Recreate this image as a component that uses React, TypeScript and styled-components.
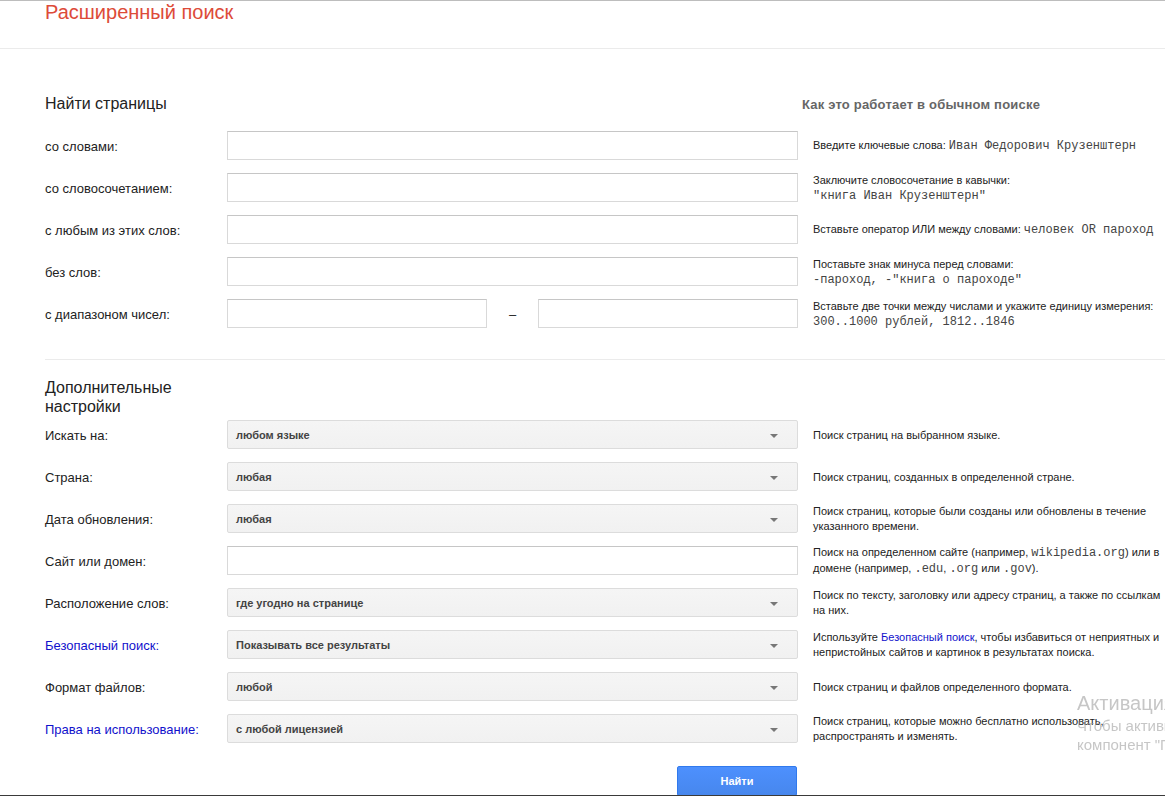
import type { ReactNode } from 'react';
import styled, { createGlobalStyle } from 'styled-components';

const GlobalStyle = createGlobalStyle`
    html, body {
        margin: 0;
        padding: 0;
        background: #fff;
        overflow: hidden;
    }
    body {
        font-family: 'Liberation Sans', Arial, sans-serif;
        color: #222;
    }
`;

interface TextRow {
    label: string;
    hint: ReactNode;
    range?: boolean;
}

interface OptionRow {
    label: string;
    value?: string;
    link?: boolean;
    hint: ReactNode;
}

export default function App() {
    const textRows: TextRow[] = [
        {
            label: 'со словами:',
            hint: (
                <>
                    Введите ключевые слова: <Code>Иван Федорович Крузенштерн</Code>
                </>
            ),
        },
        {
            label: 'со словосочетанием:',
            hint: (
                <>
                    Заключите словосочетание в кавычки:
                    <br />
                    <Code>"книга Иван Крузенштерн"</Code>
                </>
            ),
        },
        {
            label: 'с любым из этих слов:',
            hint: (
                <>
                    Вставьте оператор ИЛИ между словами: <Code>человек OR пароход</Code>
                </>
            ),
        },
        {
            label: 'без слов:',
            hint: (
                <>
                    Поставьте знак минуса перед словами:
                    <br />
                    <Code>-пароход, -"книга о пароходе"</Code>
                </>
            ),
        },
        {
            label: 'с диапазоном чисел:',
            range: true,
            hint: (
                <>
                    Вставьте две точки между числами и укажите единицу измерения:
                    <br />
                    <Code>300..1000 рублей, 1812..1846</Code>
                </>
            ),
        },
    ];

    const optionRows: OptionRow[] = [
        {
            label: 'Искать на:',
            value: 'любом языке',
            hint: 'Поиск страниц на выбранном языке.',
        },
        {
            label: 'Страна:',
            value: 'любая',
            hint: 'Поиск страниц, созданных в определенной стране.',
        },
        {
            label: 'Дата обновления:',
            value: 'любая',
            hint: 'Поиск страниц, которые были созданы или обновлены в течение указанного времени.',
        },
        {
            label: 'Сайт или домен:',
            hint: (
                <>
                    Поиск на определенном сайте (например, <Code>wikipedia.org</Code>) или в
                    домене (например, <Code>.edu</Code>, <Code>.org</Code> или <Code>.gov</Code>).
                </>
            ),
        },
        {
            label: 'Расположение слов:',
            value: 'где угодно на странице',
            hint: 'Поиск по тексту, заголовку или адресу страниц, а также по ссылкам на них.',
        },
        {
            label: 'Безопасный поиск:',
            value: 'Показывать все результаты',
            link: true,
            hint: (
                <>
                    Используйте <HintLink>Безопасный поиск</HintLink>, чтобы избавиться от
                    неприятных и непристойных сайтов и картинок в результатах поиска.
                </>
            ),
        },
        {
            label: 'Формат файлов:',
            value: 'любой',
            hint: 'Поиск страниц и файлов определенного формата.',
        },
        {
            label: 'Права на использование:',
            value: 'с любой лицензией',
            link: true,
            hint: 'Поиск страниц, которые можно бесплатно использовать, распространять и изменять.',
        },
    ];

    return (
        <Page>
            <GlobalStyle />
            <Header>
                <Title>Расширенный поиск</Title>
            </Header>

            <Section>
                <SectionHead>
                    <Heading>Найти страницы</Heading>
                    <HowHeading>Как это работает в обычном поиске</HowHeading>
                </SectionHead>

                <Rows>
                    {textRows.map((row, i) => (
                        <Row key={i}>
                            <Label>{row.label}</Label>
                            {row.range ? (
                                <RangeWrap>
                                    <TextInput $width={260} />
                                    <Dash>–</Dash>
                                    <TextInput $width={260} />
                                </RangeWrap>
                            ) : (
                                <TextInput />
                            )}
                            <Hint>{row.hint}</Hint>
                        </Row>
                    ))}
                </Rows>
            </Section>

            <Divider />

            <Section>
                <ExtraHeading>Дополнительные настройки</ExtraHeading>
                <Rows $top={4}>
                    {optionRows.map((row, i) => (
                        <Row key={i}>
                            <Label $link={row.link}>{row.label}</Label>
                            {row.value !== undefined ? (
                                <SelectBox>
                                    {row.value}
                                    <Arrow />
                                </SelectBox>
                            ) : (
                                <TextInput />
                            )}
                            <Hint>{row.hint}</Hint>
                        </Row>
                    ))}
                </Rows>

                <ButtonRow>
                    <SubmitButton>Найти</SubmitButton>
                </ButtonRow>
            </Section>

            {/* system watermark lying over the page */}
            <Watermark>
                <WatermarkTitle>Активация Windows</WatermarkTitle>
                <WatermarkText>Чтобы активировать Windows, перейдите в</WatermarkText>
                <WatermarkText>компонент "Параметры ПК".</WatermarkText>
            </Watermark>
            <TaskbarEdge />
        </Page>
    );
}

const Page = styled.div`
    width: 1240px;
    min-height: 796px;
    border-top: 1px solid #bdbdbd;
`;

const Header = styled.header`
    height: 47px;
    padding-left: 45px;
    border-bottom: 1px solid #ebebeb;
`;

const Title = styled.h1`
    margin: 0;
    padding-top: 1px;
    font-size: 20px;
    line-height: 20px;
    font-weight: normal;
    color: #dd4b39;
`;

const Section = styled.section`
    padding-left: 45px;
`;

const SectionHead = styled.div`
    display: flex;
    align-items: baseline;
    margin-top: 44px;
`;

const Heading = styled.h2`
    width: 757px;
    margin: 0;
    padding-top: 1px;
    font-size: 16px;
    line-height: 19px;
    font-weight: normal;
    color: #222;
`;

const HowHeading = styled.h3`
    margin: 0;
    font-size: 13px;
    font-weight: bold;
    letter-spacing: 0.2px;
    color: #666;
`;

const ExtraHeading = styled.h2`
    width: 160px;
    margin: 0;
    font-size: 16px;
    line-height: 19px;
    font-weight: normal;
    color: #222;
`;

const Rows = styled.div<{ $top?: number }>`
    display: flex;
    flex-direction: column;
    gap: 13px;
    margin-top: ${(p) => p.$top ?? 18}px;
`;

const Row = styled.div`
    display: grid;
    grid-template-columns: 182px 571px 370px;
    grid-template-rows: 29px;
    align-items: center;
    height: 29px;
`;

const Label = styled.label<{ $link?: boolean }>`
    padding-top: 2px;
    font-size: 13px;
    color: ${(p) => (p.$link ? '#1111cc' : '#222')};
    cursor: ${(p) => (p.$link ? 'pointer' : 'default')};
`;

const TextInput = styled.input.attrs({ type: 'text' })<{ $width?: number }>`
    box-sizing: border-box;
    width: ${(p) => p.$width ?? 571}px;
    height: 29px;
    margin: 0;
    padding: 0 8px;
    border: 1px solid #d9d9d9;
    border-top-color: #c6c6c6;
    background: #fff;
    font-family: inherit;
    font-size: 13px;
    outline: none;
`;

const RangeWrap = styled.div`
    display: flex;
    align-items: center;
`;

const Dash = styled.span`
    width: 51px;
    padding-top: 2px;
    text-align: center;
    font-size: 13px;
    color: #222;
`;

const Hint = styled.div`
    margin-left: 15px;
    padding-top: 1px;
    font-size: 11px;
    line-height: 15px;
    color: #222;
`;

const Code = styled.span`
    font-family: 'Liberation Mono', 'Courier New', monospace;
    font-size: 12px;
    color: #444;
`;

const HintLink = styled.a`
    color: #1111cc;
    text-decoration: none;
    cursor: pointer;
`;

const Divider = styled.hr`
    margin: 31px 0 18px 45px;
    border: 0;
    border-top: 1px solid #ebebeb;
`;

const SelectBox = styled.div`
    position: relative;
    box-sizing: border-box;
    width: 571px;
    height: 29px;
    padding: 1px 0 0 8px;
    display: flex;
    align-items: center;
    border: 1px solid #dcdcdc;
    border-radius: 2px;
    background: linear-gradient(#f5f5f5, #f1f1f1);
    font-size: 11px;
    font-weight: bold;
    color: #444;
`;

const Arrow = styled.span`
    position: absolute;
    right: 19px;
    top: 13px;
    width: 0;
    height: 0;
    border-left: 4px solid transparent;
    border-right: 4px solid transparent;
    border-top: 4px solid #777;
`;

const ButtonRow = styled.div`
    width: 753px;
    display: flex;
    justify-content: flex-end;
    margin-top: 23px;
`;

const SubmitButton = styled.button`
    width: 120px;
    height: 30px;
    margin-right: 1px;
    border: 1px solid #3079ed;
    border-radius: 2px;
    background: linear-gradient(#4d90fe, #4787ed);
    color: #fff;
    font-family: inherit;
    font-size: 11px;
    font-weight: bold;
    cursor: pointer;
`;

const Watermark = styled.div`
    position: fixed;
    left: 1077px;
    top: 690px;
    white-space: nowrap;
    color: rgba(160, 160, 160, 0.6);
    pointer-events: none;
`;

const WatermarkTitle = styled.div`
    font-size: 20px;
    line-height: 26px;
`;

const WatermarkText = styled.div`
    font-size: 15px;
    line-height: 19px;
`;

const TaskbarEdge = styled.div`
    position: fixed;
    left: 0;
    right: 0;
    bottom: 0;
    height: 1px;
    background: #3a3a3a;
`;
